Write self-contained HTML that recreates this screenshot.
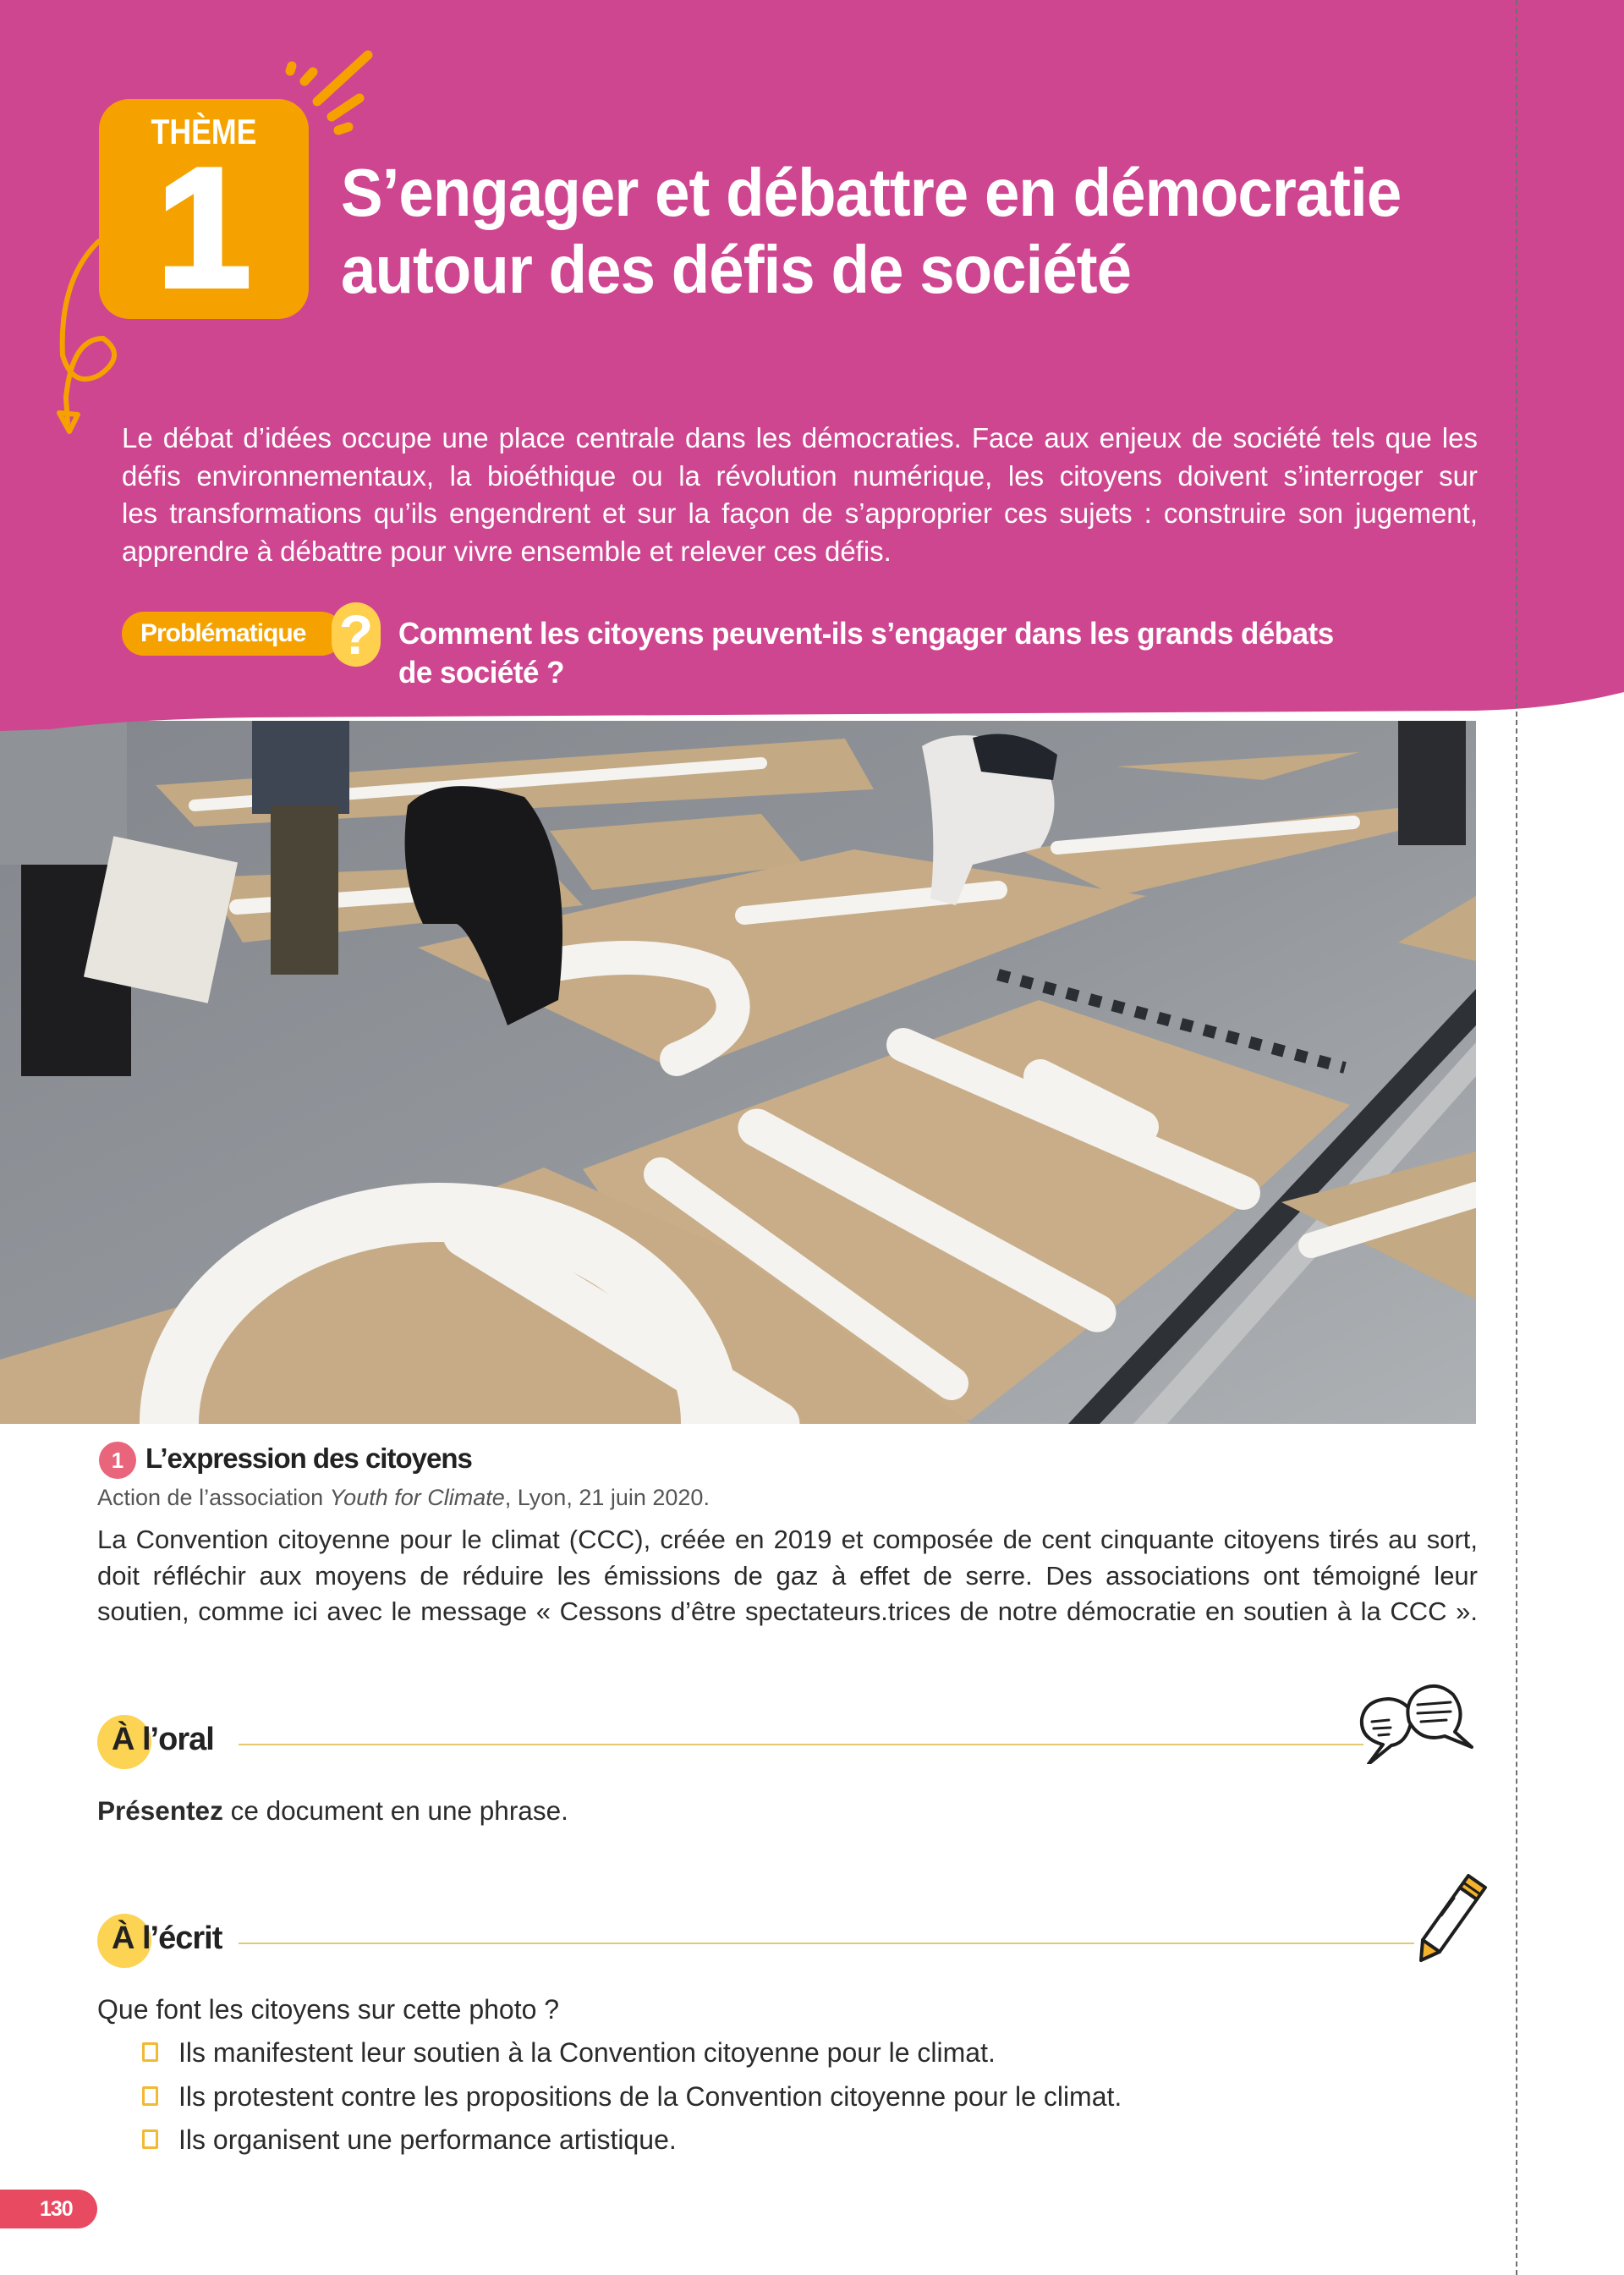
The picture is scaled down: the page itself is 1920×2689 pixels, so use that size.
<!DOCTYPE html>
<html><head><meta charset="utf-8">
<style>
*{margin:0;padding:0;box-sizing:border-box}
body{width:1920px;height:2689px;position:relative;background:#fff;font-family:"Liberation Sans",sans-serif;overflow:hidden;color:#2b2b2b}
.a{position:absolute;white-space:nowrap}
.j{display:block;text-align:justify;text-align-last:justify;white-space:nowrap}
</style></head><body>

<svg class="a" style="left:0;top:852px" width="1745" height="831" viewBox="0 0 1745 831">
<defs><linearGradient id="pv" x1="0" y1="0" x2="1" y2="1"><stop offset="0" stop-color="#83878d"/><stop offset=".5" stop-color="#92969b"/><stop offset="1" stop-color="#aeb1b4"/></linearGradient></defs>
<rect width="1745" height="831" fill="url(#pv)"/>
<path d="M1745 317 L1263 831 L1300 831 L1745 360Z" fill="#2e3135"/>
<path d="M1745 380 L1340 831 L1380 831 L1745 420Z" fill="#bfc1c3"/>
<g stroke="#2b2e32" stroke-width="14" stroke-dasharray="14 14"><line x1="1180" y1="300" x2="1590" y2="410"/></g>
<polygon points="184,76 999,21 1033,81 230,125" fill="#c3a984"/>
<polygon points="241,185 643,169 689,218 287,262" fill="#c3a984"/>
<polygon points="1320,54 1607,37 1493,70" fill="#c3a984"/>
<polygon points="650,130 900,110 950,170 700,200" fill="#c3a984"/>
<polygon points="494,268 1010,152 1355,207 804,415" fill="#c6ab86"/>
<polygon points="1205,152 1653,103 1653,130 1320,207" fill="#c6ab86"/>
<polygon points="1653,262 1745,207 1745,284" fill="#c3a984"/>
<polygon points="1515,569 1745,509 1745,684" fill="#c3a984"/>
<polygon points="689,530 1228,330 1596,454 1447,591 1148,826 900,831" fill="#c8ad88"/>
<polygon points="0,755 287,670 643,528 872,629 1148,831 0,831" fill="#c6ab86"/>
<g stroke="#f4f3ef" stroke-linecap="round" fill="none">
<line x1="551" y1="607" x2="918" y2="831" stroke-width="55"/>
<path d="M200 831 A320 250 0 0 1 840 831" stroke-width="70"/>
<line x1="781" y1="536" x2="1125" y2="783" stroke-width="40"/>
<line x1="895" y1="481" x2="1297" y2="700" stroke-width="45"/>
<line x1="1068" y1="383" x2="1470" y2="558" stroke-width="40"/>
<line x1="1230" y1="420" x2="1350" y2="480" stroke-width="40"/>
<path d="M600 300 Q760 260 850 300 Q900 360 800 400" stroke-width="40"/>
<line x1="880" y1="230" x2="1180" y2="200" stroke-width="22"/>
<line x1="1250" y1="150" x2="1600" y2="120" stroke-width="16"/>
<line x1="230" y1="100" x2="900" y2="50" stroke-width="14"/>
<line x1="280" y1="220" x2="640" y2="195" stroke-width="18"/>
<line x1="1550" y1="620" x2="1745" y2="560" stroke-width="30"/>
</g>
<rect x="0" y="0" width="150" height="170" fill="#8f9297"/>
<rect x="25" y="170" width="130" height="250" fill="#1d1d20"/>
<rect x="115" y="150" width="150" height="170" fill="#e8e5df" transform="rotate(12 190 235)"/>
<rect x="298" y="0" width="115" height="110" fill="#3d4652"/>
<rect x="320" y="100" width="80" height="200" fill="#4a4536"/>
<path d="M482 100 Q520 60 620 90 Q680 160 660 330 L600 360 Q560 250 540 240 L500 240 Q470 180 482 100Z" fill="#18181a"/>
<path d="M1090 30 Q1140 0 1230 40 Q1263 100 1230 150 L1150 170 L1130 218 L1100 210 Q1110 120 1090 30Z" fill="#e9e8e6"/>
<path d="M1150 20 Q1200 5 1250 40 L1245 70 L1160 60Z" fill="#22262c"/>
<rect x="1653" y="0" width="80" height="147" fill="#2a2c30"/>
</svg>

<svg class="a" style="left:0;top:0" width="1920" height="880" viewBox="0 0 1920 880">
<path d="M0 0 H1920 V818 Q1840 838 1745 840 L300 848 Q150 850 60 862 L0 864Z" fill="#cf4690"/>
</svg>

<div class="a" style="left:1792px;top:0;width:0;height:2689px;border-left:2px dashed #6f6f6f"></div>

<svg class="a" style="left:60px;top:55px" width="400" height="470" viewBox="60 55 400 470">
<g stroke="#f5a200" stroke-width="11" stroke-linecap="round" fill="none">
<line x1="435" y1="65" x2="375" y2="120"/>
<line x1="425" y1="116" x2="392" y2="138"/>
<line x1="412" y1="150" x2="400" y2="154"/>
<line x1="370" y1="85" x2="360" y2="96"/>
<line x1="345" y1="78" x2="343" y2="84"/>
<path d="M117 285 Q70 330 74 420 Q86 460 118 443 Q150 420 122 400 Q85 400 78 470 L80 500" stroke-width="6"/>
<path d="M70 488 L92 490 L82 510Z" stroke-width="6" stroke-linejoin="round"/>
</g>
<rect x="117" y="117" width="248" height="260" rx="36" fill="#f5a200"/>
</svg>
<div class="a" style="left:117px;top:132px;width:248px;text-align:center;color:#fff;font-weight:bold;font-size:42px;transform:scaleX(.85)">THÈME</div>
<div class="a" style="left:117px;top:160px;width:248px;text-align:center;color:#fff;font-weight:bold;font-size:200px;line-height:220px;-webkit-text-stroke:6px #fff">1</div>

<div class="a" style="left:403px;top:182px;color:#fff;font-weight:bold;font-size:80px;line-height:91px;transform:scaleX(.93);transform-origin:left top;letter-spacing:-1px">S’engager et débattre en démocratie<br>autour des défis de société</div>

<div class="a" style="left:144px;top:496px;width:1603px;color:#fff;font-size:33px;line-height:44.6px">
<span class="j">Le débat d’idées occupe une place centrale dans les démocraties. Face aux enjeux de société tels que les</span>
<span class="j">défis environnementaux, la bioéthique ou la révolution numérique, les citoyens doivent s’interroger sur</span>
<span class="j">les transformations qu’ils engendrent et sur la façon de s’approprier ces sujets : construire son jugement,</span>
<span style="display:block">apprendre à débattre pour vivre ensemble et relever ces défis.</span>
</div>

<div class="a" style="left:144px;top:723px;width:262px;height:52px;border-radius:26px;background:#f5a200;color:#fff;font-weight:bold;font-size:30px;line-height:52px;padding-left:22px;letter-spacing:-1px">Problématique</div>
<div class="a" style="left:392px;top:712px;width:58px;height:76px;border-radius:29px;background:#ffd04d;color:#fff;font-weight:bold;font-size:66px;line-height:76px;text-align:center">?</div>
<div class="a" style="left:471px;top:726px;color:#fff;font-weight:bold;font-size:36px;line-height:46px;transform:scaleX(.97);transform-origin:left top;letter-spacing:-.5px">Comment les citoyens peuvent-ils s’engager dans les grands débats<br>de société ?</div>

<div class="a" style="left:117px;top:1704px;width:44px;height:44px;border-radius:50%;background:#e9657c;color:#fff;font-weight:bold;font-size:26px;line-height:44px;text-align:center">1</div>
<div class="a" style="left:172px;top:1705px;font-weight:bold;font-size:33px;color:#222;letter-spacing:-1px">L’expression des citoyens</div>
<div class="a" style="left:115px;top:1755px;font-size:27px;color:#555">Action de l’association <i>Youth for Climate</i>, Lyon, 21 juin 2020.</div>
<div class="a" style="left:115px;top:1799px;width:1632px;font-size:31px;line-height:42.5px;color:#2b2b2b">
<span class="j">La Convention citoyenne pour le climat (CCC), créée en 2019 et composée de cent cinquante citoyens tirés au sort,</span>
<span class="j">doit réfléchir aux moyens de réduire les émissions de gaz à effet de serre. Des associations ont témoigné leur</span>
<span class="j">soutien, comme ici avec le message « Cessons d’être spectateurs.trices de notre démocratie en soutien à la CCC ».</span>
</div>

<div class="a" style="left:115px;top:2027px;width:64px;height:64px;border-radius:50%;background:#fcd352"></div>
<div class="a" style="left:132px;top:2035px;font-weight:bold;font-size:38px;color:#222;letter-spacing:-1px">À l’oral</div>
<div class="a" style="left:282px;top:2061px;width:1330px;height:2px;background:#e2c870"></div>
<svg class="a" style="left:1600px;top:1985px" width="150" height="100" viewBox="0 0 150 100">
<g fill="#fff" stroke="#1e1e1e" stroke-width="4" stroke-linejoin="round">
<path d="M35 77 Q8 70 10 47 Q14 24 42 23 Q60 24 70 40 Q66 75 45 78 L18 100 Z"/>
<path d="M108 67 L140 80 L120 62 Q134 40 118 18 Q98 0 76 14 Q60 28 66 50 Q80 75 108 67Z"/>
</g>
<g stroke="#1e1e1e" stroke-width="3" stroke-linecap="round">
<line x1="22" y1="50" x2="42" y2="48"/><line x1="24" y1="58" x2="44" y2="57"/><line x1="30" y1="66" x2="42" y2="65"/>
<line x1="76" y1="30" x2="115" y2="27"/><line x1="76" y1="40" x2="115" y2="38"/><line x1="80" y1="50" x2="110" y2="48"/>
</g>
</svg>
<div class="a" style="left:115px;top:2122px;font-size:31.5px;color:#2b2b2b"><b>Présentez</b> ce document en une phrase.</div>

<div class="a" style="left:115px;top:2262px;width:64px;height:64px;border-radius:50%;background:#fcd352"></div>
<div class="a" style="left:132px;top:2270px;font-weight:bold;font-size:38px;color:#222;letter-spacing:-1px">À l’écrit</div>
<div class="a" style="left:282px;top:2296px;width:1390px;height:2px;background:#e2c870"></div>
<svg class="a" style="left:1660px;top:2205px" width="100" height="115" viewBox="0 0 100 115">
<g stroke="#1e1e1e" stroke-width="4" stroke-linejoin="round">
<path d="M22 88 L66 26 L86 40 L42 102 Z" fill="#fff"/>
<path d="M66 26 L76 12 L96 26 L86 40Z" fill="#f5b22b"/>
<path d="M22 88 L42 102 L20 112 Z" fill="#f5b22b"/>
</g>
<line x1="70" y1="20" x2="90" y2="34" stroke="#1e1e1e" stroke-width="3"/>
<line x1="44" y1="60" x2="60" y2="38" stroke="#1e1e1e" stroke-width="2"/>
</svg>
<div class="a" style="left:115px;top:2357px;font-size:32px;color:#2b2b2b">Que font les citoyens sur cette photo ?</div>
<div class="a" style="left:168px;top:2414px;width:19px;height:23px;border:3px solid #f2b935;border-radius:2px"></div>
<div class="a" style="left:211px;top:2408px;font-size:32px;color:#2b2b2b">Ils manifestent leur soutien à la Convention citoyenne pour le climat.</div>
<div class="a" style="left:168px;top:2466px;width:19px;height:23px;border:3px solid #f2b935;border-radius:2px"></div>
<div class="a" style="left:211px;top:2460px;font-size:32px;color:#2b2b2b">Ils protestent contre les propositions de la Convention citoyenne pour le climat.</div>
<div class="a" style="left:168px;top:2517px;width:19px;height:23px;border:3px solid #f2b935;border-radius:2px"></div>
<div class="a" style="left:211px;top:2511px;font-size:32px;color:#2b2b2b">Ils organisent une performance artistique.</div>

<div class="a" style="left:0;top:2588px;width:115px;height:46px;border-radius:0 23px 23px 0;background:#e84b61;color:#fff;font-weight:bold;font-size:25px;line-height:46px;padding-left:47px;letter-spacing:-1px">130</div>

</body></html>
